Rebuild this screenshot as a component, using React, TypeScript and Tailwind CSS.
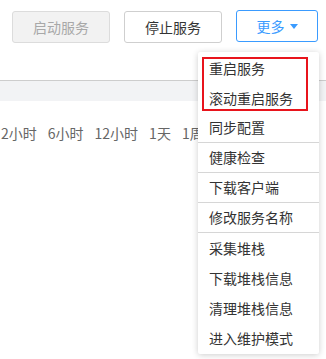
import React from "react";

const items: { label: string; divider?: boolean }[] = [
  { label: "重启服务" },
  { label: "滚动重启服务" },
  { label: "同步配置", divider: true },
  { label: "健康检查", divider: true },
  { label: "下载客户端", divider: true },
  { label: "修改服务名称", divider: true },
  { label: "采集堆栈" },
  { label: "下载堆栈信息" },
  { label: "清理堆栈信息" },
  { label: "进入维护模式" },
];

const ranges = ["2小时", "6小时", "12小时", "1天", "1周"];

export default function App() {
  return (
    <div
      className="relative h-[359px] w-[326px] overflow-hidden bg-white text-[14px]"
      style={{ fontFamily: '"Noto Sans CJK SC", "Liberation Sans", sans-serif' }}
    >
      {/* action buttons */}
      <div className="flex h-[53px] items-start gap-[14px] pl-[12px] pt-[11px]">
        <button className="h-[32px] w-[98px] rounded-[3px] border border-[#dcdcdc] bg-[#f2f2f2] text-[#a8a8a8]">
          启动服务
        </button>
        <button className="h-[32px] w-[98px] rounded-[3px] border border-[#cfcfcf] bg-white text-[#333]">
          停止服务
        </button>
        <button className="-mt-px flex h-[32px] w-[82px] items-center justify-center gap-[5px] rounded-[3px] border border-[#3a9bff] bg-white text-[#3a9bff]">
          更多
          <svg width="8" height="5" viewBox="0 0 8 5" className="mt-px">
            <path d="M0 0h8L4 5z" fill="#3a9bff" />
          </svg>
        </button>
      </div>

      {/* table header strip */}
      <div className="mt-[27px] h-[21px] border-t border-[#cdcdcd] bg-[#f2f3f5]" />

      {/* time range */}
      <div className="mt-[22px] flex gap-[11px] pl-[1px] leading-[20px] text-[#666]">
        {ranges.map((r) => (
          <span key={r}>{r}</span>
        ))}
      </div>

      {/* dropdown menu */}
      <div className="absolute left-[198px] top-[52px] w-[121px] rounded-[2px] bg-white py-px shadow-[0_1px_6px_rgba(0,0,0,0.2)]">
        {items.map((it) => (
          <div
            key={it.label}
            className={
              "flex h-[30px] items-center pl-[11px] text-[#333] " +
              (it.divider ? "border-b border-[#d6d6d6]" : "")
            }
          >
            {it.label}
          </div>
        ))}
      </div>

      {/* highlight annotation */}
      <div className="absolute left-[202px] top-[57px] h-[54px] w-[106px] border-2 border-[#e8141c]" />
    </div>
  );
}
